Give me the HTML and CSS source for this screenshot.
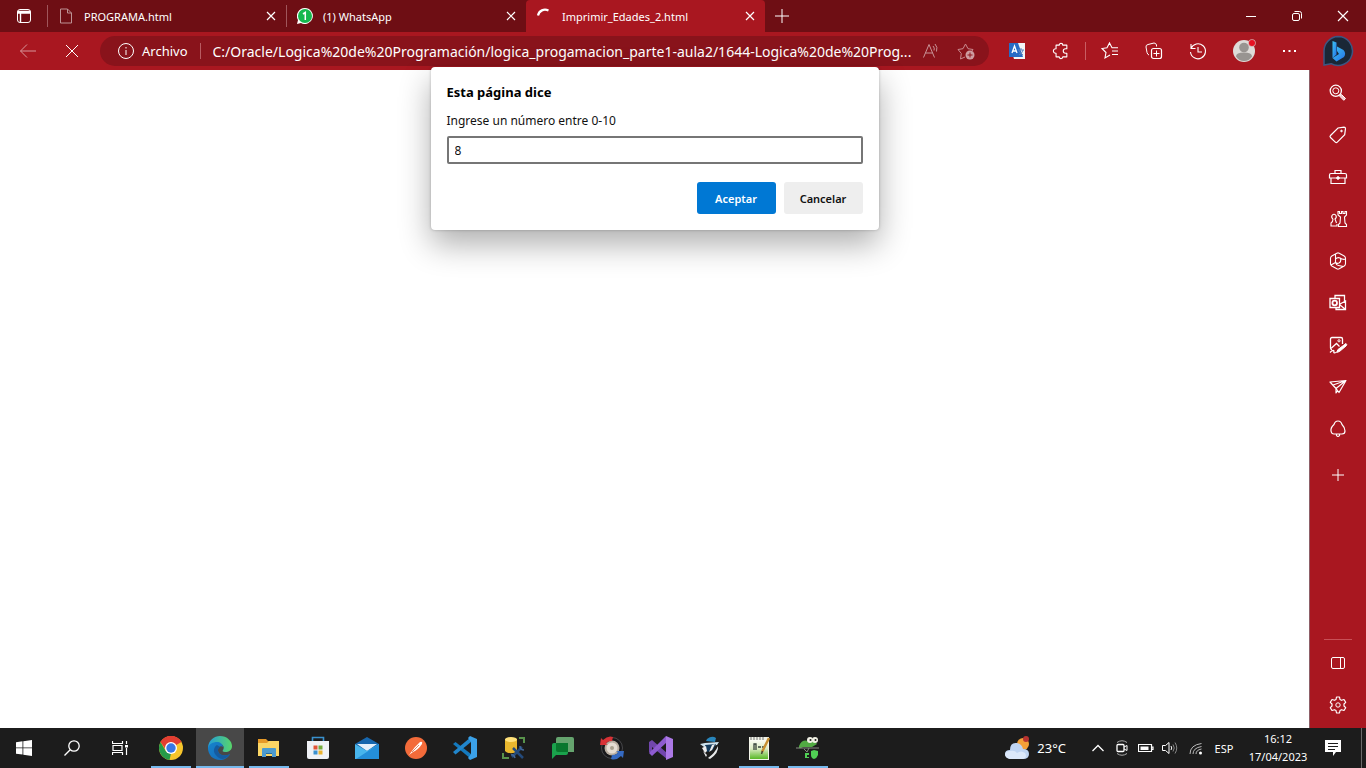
FILE: index.html
```html
<!DOCTYPE html>
<html lang="es">
<head>
<meta charset="utf-8">
<title>Imprimir_Edades_2.html</title>
<link rel="stylesheet" href="styles.css">
</head>
<body>
<div class="screen">
  <header class="tabbar">
    <button class="workspace" aria-label="Menú de pestañas"><svg class="i16" viewBox="0 0 16 16"><rect x="1.5" y="1.5" width="13" height="13" rx="2.5"/><path d="M1.5 3.5h13M1.5 5h13M4.500 5v9.500" stroke-width="1.400"/></svg></button>
    <div class="tab divided">
      <svg class="i16 faint" viewBox="0 0 16 16"><path d="M2.500 1h7l4 4v10h-11zM9.500 1v4h4"/></svg>
      <span class="tab-title">PROGRAMA.html</span>
      <button class="tab-close" aria-label="Cerrar pestaña"><svg class="i16" viewBox="0 0 16 16"><path d="M4 4l8 8M12 4l-8 8" stroke-width="1.200"/></svg></button>
    </div>
    <div class="tab divided">
      <svg class="i16 solid" viewBox="0 0 16 16"><path fill="#fff" d="M8 0a8 8 0 1 1-4 15L0 16l1-4A8 8 0 0 1 8 0z"/><circle cx="8" cy="8" r="7" fill="#16b84e"/><path d="M6 6l2.300-1.500V12" fill="none" stroke="#fff" stroke-width="1.500"/></svg>
      <span class="tab-title">(1) WhatsApp</span>
      <button class="tab-close" aria-label="Cerrar pestaña"><svg class="i16" viewBox="0 0 16 16"><path d="M4 4l8 8M12 4l-8 8" stroke-width="1.200"/></svg></button>
    </div>
    <div class="tab active">
      <svg class="i16" viewBox="0 0 16 16"><path d="M2 7.500C3 2.500 8 .5 12.500 2.500" stroke-width="2.200"/></svg>
      <span class="tab-title">Imprimir_Edades_2.html</span>
      <button class="tab-close" aria-label="Cerrar pestaña"><svg class="i16" viewBox="0 0 16 16"><path d="M4 4l8 8M12 4l-8 8" stroke-width="1.200"/></svg></button>
    </div>
    <button class="new-tab" aria-label="Nueva pestaña"><svg class="i16" viewBox="0 0 16 16"><path d="M8 1v14M1 8h14"/></svg></button>
    <div class="window-controls">
      <button class="win" aria-label="Minimizar"><svg class="i16" viewBox="0 0 16 16"><path d="M3 8.500h10"/></svg></button>
      <button class="win" aria-label="Restaurar"><svg class="i16" viewBox="0 0 16 16"><rect x="3.500" y="5.500" width="7" height="7" rx="1.500"/><path d="M5.500 3.500h5a2 2 0 0 1 2 2v5"/></svg></button>
      <button class="win" aria-label="Cerrar"><svg class="i16" viewBox="0 0 16 16"><path d="M3 3l10 10M13 3L3 13" stroke-width="1.200"/></svg></button>
    </div>
  </header>

  <div class="toolbar">
    <button class="tool" aria-label="Atrás"><svg class="i20 faint" viewBox="0 0 20 20"><path d="M18 10H2.500M9 3.500L2.500 10 9 16.500"/></svg></button>
    <button class="tool" aria-label="Detener"><svg class="i20" viewBox="0 0 20 20"><path d="M4 4l12 12M16 4L4 16"/></svg></button>
    <div class="address">
      <svg class="i18" viewBox="0 0 18 18"><circle cx="9" cy="9" r="7.500"/><path d="M9 8v5M9 5v1.500"/></svg>
      <span class="scheme">Archivo</span>
      <input class="url" aria-label="Dirección" value="C:/Oracle/Logica%20de%20Programación/logica_progamacion_parte1-aula2/1644-Logica%20de%20Prog..." readonly>
      <button class="address-icon" aria-label="Leer en voz alta"><svg class="i18 faint" viewBox="0 0 18 18"><path d="M1.500 15.500L7 2.500l5.500 13M3.500 11h7M11 4q2 2 1 4.500M13 2q3 3 1.500 7.500"/></svg></button>
      <button class="address-icon favorite" aria-label="Agregar a favoritos"><svg class="i18" viewBox="0 0 18 18"><path d="M8 15l-4.500 2 .8-5.500L1 7.500l5-.8L8.500 2 11 6.700l5 .8-1 1.500" stroke="#c98a8f"/><circle cx="13" cy="13" r="4.500" fill="#ce9da1" stroke="none"/><path d="M13 10.500v5M10.500 13h5" stroke="#8d141c"/></svg></button>
    </div>
    <button class="tool" aria-label="Traductor"><svg class="i16 solid" viewBox="0 0 16 16"><path fill="#f3f5f8" d="M0 0h16v16H5z"/><path fill="#286bc5" d="M0 0h9l5 14H0z"/><path d="M3 10L5.500 3 8 10M4 8h3" fill="none" stroke="#fff" stroke-width="1.300"/><path d="M9 7h6M12 5v2M14 7q-1 4-4 5M10 8q2 3 4 4" fill="none" stroke="#5c83bd"/></svg></button>
    <button class="tool" aria-label="Extensiones"><svg class="i18" viewBox="0 0 20 20"><path d="M8 3.500a2 2 0 0 1 4 0h4.500v4H15a2.500 2.500 0 0 0 0 5h1.500v4H12a2 2 0 0 1-4 0H4.500v-4H4a2.500 2.500 0 0 1 0-5h.5v-4z" stroke-linejoin="round" stroke-width="1.200"/></svg></button>
    <span class="tool-divider"></span>
    <button class="tool" aria-label="Favoritos"><svg class="i20" viewBox="0 0 20 20"><path d="M10 14l-5 3 1-5.500L2 7.500l5-.8L9.500 2 12 6.700h6M12 10h6M12 13.500h6" stroke-width="1.100"/></svg></button>
    <button class="tool" aria-label="Colecciones"><svg class="i20" viewBox="0 0 20 20"><rect x="7.500" y="7.500" width="10" height="10" rx="2" stroke-width="1.200"/><path d="M12.500 9.500v6M9.500 12.500h6M5 14q-1.500-.5-2-2.500L2 6q-.3-2 2-2.500L10 2q2 0 2.500 2v1.500"/></svg></button>
    <button class="tool" aria-label="Historial"><svg class="i20" viewBox="0 0 20 20"><path d="M3 3v4.500h4.500M3 7.500A7.500 7.500 0 1 1 2.500 11M10 6v5h4" stroke-width="1.100"/></svg></button>
    <button class="tool profile" aria-label="Perfil"><svg class="i24 solid" viewBox="0 0 24 24"><circle cx="12" cy="12" r="11" fill="#dedbd8"/><circle cx="12" cy="8.500" r="4.800" fill="#989491"/><path d="M4 17.500q0-4 8-4t8 4q-3 4.500-8 4.500t-8-4.500z" fill="#989491"/><circle cx="20" cy="4" r="3.800" fill="#d9a3a6"/><circle cx="20" cy="4" r="3" fill="#e81123"/></svg></button>
    <button class="tool menu" aria-label="Configuración y más"><svg class="i20 solid" viewBox="0 0 20 20"><path fill="#fff" d="M4 9h2v2H4zM9.500 9h2v2h-2zM15 9h2v2h-2z"/></svg></button>
    <button class="tool bing" aria-label="Bing"><svg class="i32" viewBox="0 0 32 32"><defs><linearGradient id="b1" x2="1" y2="1"><stop stop-color="#3cc7f1"/><stop offset="1" stop-color="#2570e8"/></linearGradient></defs><path d="M16 1.500a14.500 14.500 0 1 1-7 27.200L2 30V16A14.500 14.500 0 0 1 16 1.500z" fill="#1a2736" stroke="#3d5682" stroke-width="1.500"/><path d="M10.500 6l4 1.500v12l-4 3.500z" fill="url(#b1)" stroke="none"/><path d="M15 11.500l6.500 3.500q3 3.500.5 7l-7.500 4.500-4-3.500 6.500-4-2-3z" fill="url(#b1)" stroke="none"/></svg></button>
  </div>

  <div class="body">
    <main class="page">
      <form class="dialog" role="dialog" aria-labelledby="dialog-title">
        <h1 class="dialog-title" id="dialog-title">Esta página dice</h1>
        <label class="dialog-label" for="answer">Ingrese un número entre 0-10</label>
        <input class="dialog-input" id="answer" type="text" value="8">
        <div class="dialog-actions">
          <button class="btn primary" type="button">Aceptar</button>
          <button class="btn" type="button">Cancelar</button>
        </div>
      </form>
    </main>
    <aside class="sidebar">
      <button class="side" aria-label="Buscar"><svg class="i20" viewBox="0 0 20 20"><circle cx="7.800" cy="7.800" r="5.600" stroke-width="1.300"/><circle cx="7.800" cy="7.800" r="3"/><path d="M12 12l1.500-.5 4 4-1.700 1.800-4-4z" fill="#f3c7ca"/></svg></button>
      <button class="side" aria-label="Compras"><svg class="i20" viewBox="0 0 20 20"><path d="M2.500 10.500L10 3l6-.8q1.500 0 1.500 1.500l-.8 6-7.400 7.500q-1 1-2 0L2.500 12.500q-1-1 0-2z" stroke-width="1.200"/><circle cx="13.500" cy="6" r=".8" fill="#fff"/></svg></button>
      <button class="side" aria-label="Herramientas"><svg class="i20" viewBox="0 0 20 20"><path d="M7 6.500v-3h6v3M1.500 11V8q0-1.500 1.500-1.500h14q1.500 0 1.500 1.500v3zM3 11v5.500h14V11" stroke-width="1.200"/><circle cx="10" cy="11" r="1.300" fill="#fff"/></svg></button>
      <button class="side" aria-label="Juegos"><svg class="i20" viewBox="0 0 20 20"><path d="M5 10q-2-1.500-1-3.500 2-2.500 4 0 1 2-1 3.500l1.500 4M5 10q0 3-2 4v3h6v-2M10 2.500h1.500v2h2v-2H15v2h2v-2h1.500V6l-2 2 .5 6 1.500 1.500v2h-8v-2L12 14l.5-6L10 6z" stroke-width="1.100"/></svg></button>
      <button class="side" aria-label="Microsoft 365"><svg class="i20" viewBox="0 0 20 20"><path d="M8.800 2.200q1.200-.6 2.400 0l5 2.800q1.300.8 1.300 2.200v5.600q0 1.400-1.300 2.200l-5 2.800q-1.200.6-2.400 0l-5-2.800q-1.300-.8-1.300-2.200V7.200Q2.500 5.800 3.800 5zM7.500 3v8.500q.5 2.500 3 3l5 1M7.500 8q2-2 4.500-1 3 2 5.500 1M12.500 7.500q1 3-1.500 4.500-2 1-3.500-.5M3 14l4.500-2.500" stroke-width="1.100" stroke-linejoin="round"/></svg></button>
      <button class="side" aria-label="Outlook"><svg class="i20" viewBox="0 0 20 20"><path d="M7 5V2.500h9.500V8M12 11l5.500-3v8.500H8V15M12 12l5 4M2 5.500h9.500v9H2z" stroke-width="1.300"/><circle cx="6.700" cy="10" r="2.300" stroke-width="1.800"/></svg></button>
      <button class="side" aria-label="Editor de imágenes"><svg class="i20" viewBox="0 0 20 20"><path d="M4 14.500q-1.500 0-1.500-2V4q0-1.500 1.500-1.500h9q1.500 0 1.500 1.500v5M3.500 13l5-4.500 3 3M2 17.500q3-3 4-1.500-1 2.500 2 1.500" stroke-width="1.300"/><circle cx="11" cy="5.800" r="1.100"/><path fill="#fff" d="M18 8.500q1.500 1 0 2.500l-6.500 5.500-3 1 1.500-3z"/></svg></button>
      <button class="side" aria-label="Drop"><svg class="i20" viewBox="0 0 20 20"><path d="M2 5l16-1.500-7 12-3-4zM18 3.500L8 11.500v4.500l2-2.500M2 5l6 6.500M5 8l13-4.500" stroke-width="1.200" stroke-linejoin="round"/></svg></button>
      <button class="side" aria-label="Árbol"><svg class="i20" viewBox="0 0 20 20"><path d="M10 2q-3 0-4 3.500-3.500 3-3 6.500.5 3 3 3h8q3 0 3-3 0-3.500-3-6.500Q13 2 10 2zM8.500 15v1.500q1.500 2 3 0V15" stroke-width="1.200"/></svg></button>
      <button class="side add" aria-label="Agregar"><svg class="i20" viewBox="0 0 20 20"><path d="M10 4v12M4 10h12"/></svg></button>
      <div class="side-bottom">
        <button class="side" aria-label="Ocultar barra lateral"><svg class="i20" viewBox="0 0 20 20"><rect x="3.500" y="4.500" width="13" height="11" rx="1.500"/><path d="M12.500 4.500v11"/></svg></button>
        <button class="side" aria-label="Configuración"><svg class="i20" viewBox="0 0 20 20"><path d="M8.500 2h3l.5 2.500 1.500.8 2.500-.8 1.700 2.800L16 9v2l1.700 1.700L16 15.500l-2.500-.8-1.500.8-.5 2.500h-3L8 15.500l-1.500-.8-2.500.8-1.700-2.800L4 11V9L2.300 7.300 4 4.500l2.500.8L8 4.500z" stroke-linejoin="round" stroke-width="1.200"/><circle cx="10" cy="10" r="2.200"/></svg></button>
      </div>
    </aside>
  </div>

  <footer class="taskbar">
    <button class="task" aria-label="Inicio"><svg class="i16 solid" viewBox="0 0 16 16"><path fill="#fff" d="M0 2.300L6.500 1.300v6.200H0zM7.300 1.200L16 0v7.500H7.300zM0 8.300h6.500v6.300L0 13.700zM7.300 8.300H16V16l-8.700-1.200z"/></svg></button>
    <button class="task" aria-label="Buscar"><svg class="i16" viewBox="0 0 16 16"><circle cx="10" cy="6" r="5.200" stroke-width="1.300"/><path d="M6.200 9.800L.5 15.500" stroke-width="1.300"/></svg></button>
    <button class="task" aria-label="Vista de tareas"><svg class="i16" viewBox="0 0 16 16"><path d="M.5 1v2.500h10V1M.5 15v-2.500h10V15M1 5.500h9v5H1zM14.500 1v3M14.500 8v7" stroke-width="1.200"/><path d="M13 5h3v2.500h-3z" fill="#fff" stroke="none"/></svg></button>
    <nav class="apps" aria-label="Aplicaciones">
      <button class="task running" aria-label="Chrome"><svg class="i24 solid" viewBox="0 0 24 24"><circle cx="12" cy="12" r="12" fill="#f6c52c"/><path fill="#e33e32" d="M12 12L1.600 6A12 12 0 0 1 22.400 6z"/><path fill="#269a48" d="M1.600 6L7 15.500l5 2-1.500 6.400A12 12 0 0 1 1.600 6z"/><path fill="#e33e32" d="M12 6h10.400A12 12 0 0 0 1.600 6L7 14z"/><circle cx="12" cy="12" r="6" fill="#fff"/><circle cx="12" cy="12" r="4.700" fill="#3978e5"/></svg></button>
      <button class="task current" aria-label="Edge"><svg class="i24 solid" viewBox="0 0 24 24"><defs><linearGradient id="e1" x2="1"><stop stop-color="#249dd9"/><stop offset="1" stop-color="#58d66a"/></linearGradient><linearGradient id="e2" x2="1" y2="1"><stop stop-color="#1683cc"/><stop offset="1" stop-color="#1668b5"/></linearGradient></defs><path fill="url(#e1)" d="M0 11C1 4 6 0 12 0c7 0 12 5 12 10 0 4-3 6-7 6-2 0-3-1-2-2 2-3 0-6-4-6-5 0-9 2-11 6z"/><path fill="url(#e2)" d="M0 12c1-4 5-6 9-6 3 0 6 2 6 5-2-2-5 0-5 3 0 5 6 7 12 4-2 4-6 6-10 6C5 24 0 19 0 12z"/><path fill="#155b9f" d="M9 9c-3 2-4 6-2 9s5 5 8 5c3-.5 6-3 7-5-6 3-12 1-12-4 0-1 1-2 2-3z"/></svg></button>
      <button class="task running" aria-label="Explorador de archivos"><svg class="i24 solid" viewBox="0 0 24 24"><path fill="#e79a27" d="M1 3h8l2 2h11v14H1z"/><path fill="#fbd665" d="M1 7h9l2-2h10v15H1z"/><path fill="#4c9bce" d="M5 13q0-1 1-1h12q1 0 1 1v8h-4v-4H9v4H5z"/><path fill="#286f9c" d="M9 17h6v1H9z"/></svg></button>
      <button class="task" aria-label="Microsoft Store"><svg class="i24 solid" viewBox="0 0 24 24"><path d="M6.500 5V1.500h11V5" fill="none" stroke="#3991ce" stroke-width="1.600"/><path fill="#eff1f5" d="M1 5h22v16q0 2-2 2H3q-2 0-2-2z"/><path fill="#e25437" d="M7.500 9.500h4v4h-4z"/><path fill="#73ab3c" d="M12.500 9.500h4v4h-4z"/><path fill="#3990d0" d="M7.500 14.500h4v4h-4z"/><path fill="#eab22e" d="M12.500 14.500h4v4h-4z"/></svg></button>
      <button class="task" aria-label="Correo"><svg class="i24 solid" viewBox="0 0 24 24"><path fill="#1767ae" d="M0 8L12 1l12 7-12 8z"/><path fill="#e5f1fb" d="M2 8h20l-10 7z"/><path fill="#48b5ec" d="M0 8l12 7 12-7v15H0z"/><path fill="#248ed8" d="M24 8v15H1z"/></svg></button>
      <button class="task" aria-label="Postman"><svg class="i24 solid" viewBox="0 0 24 24"><circle cx="12" cy="12" r="11" fill="#f36b3a"/><path fill="#fff" d="M5 19l6-8 5-5q3-1 2 2-4 6-9 8z"/><path d="M8 16l7-7" stroke="#df8b6b"/></svg></button>
      <button class="task" aria-label="Visual Studio Code"><svg class="i24 solid" viewBox="0 0 24 24"><path fill="#1479bd" d="M0 8l2.500-2L18 18v5z"/><path fill="#2186cc" d="M0 16l2.500 2.500L18 6V1z"/><path fill="#3ba1e8" d="M17 0l7 3v18l-7 3-2-2 3-4V6l-3-4z"/></svg></button>
      <button class="task" aria-label="Data Modeler"><svg class="i24 solid" viewBox="0 0 24 24"><path fill="#e9b72d" d="M3 3v12c2 3 10 3 12 0V3z"/><ellipse cx="9" cy="3.500" rx="6" ry="2.500" fill="#ffe17a"/><path d="M17 2h5v5M1 17v5h6" fill="none" stroke="#58934b" stroke-width="2"/><path d="M10 21L20 11M11 12l10 10" fill="none" stroke="#244b7c" stroke-width="2.500"/><path d="M18 10q0 4 4 4M9 19q3-1 4 3" fill="none" stroke="#42689a" stroke-width="1.500"/></svg></button>
      <button class="task" aria-label="Google Chat"><svg class="i24 solid" viewBox="0 0 24 24"><path fill="#65a46e" d="M7 1h14q2 0 2 2v13H5V3q0-2 2-2z"/><path fill="#1aa24c" d="M3 7h14v10q0 2-2 2H5l-4 4V9q0-2 2-2z"/><path fill="#08772d" d="M5 7h12v9H7q-2 0-2-2z"/></svg></button>
      <button class="task" aria-label="Sincronización"><svg class="i24 solid" viewBox="0 0 24 24"><circle cx="12" cy="12" r="10.500" fill="#171719" stroke="#47474a"/><circle cx="12" cy="12" r="7.500" fill="#b9aea0"/><circle cx="12" cy="12" r="5.500" fill="#e6ddd2"/><circle cx="12" cy="12" r="2" fill="#aaa18e"/><path fill="#d83236" d="M0 9l1-7 2 2q5-5 10-3l-1 4Q7 5 6 8l2 1z"/><path fill="#356ac2" d="M24 15l-1 7-2-2q-5 5-10 3l1-4q5 0 6-3l-2-1z"/></svg></button>
      <button class="task" aria-label="Visual Studio"><svg class="i24 solid" viewBox="0 0 24 24"><path fill="#7146ad" d="M0 6l3-2 15 13v6L3 11v7l-3-2z"/><path fill="#8e5bd0" d="M0 17l17-17v7L3 20z"/><path fill="#ac79e6" d="M17 0l7 3v18l-7 3z"/></svg></button>
      <button class="task" aria-label="Editor"><svg class="i24 solid" viewBox="0 0 24 24"><path fill="#2885bb" d="M9 3q5-4 9-1l-1 4-9-1z"/><path fill="#cfe3ee" d="M2 8l5-1 14-1-2 3-6 1-7 1z"/><path fill="#143b5d" d="M7 9l11-1-3 6-6 2z"/><path fill="#eee" d="M4 12l4-2 1 5-2 2zM14 9l3-1-3 6-3 2z"/><path fill="#e9eaeb" d="M20 10q1 7-8 13l-2-1q7-5 10-12zM5 15l4 4-1 2z"/></svg></button>
      <button class="task running" aria-label="Notepad++"><svg class="i24 solid" viewBox="0 0 24 24"><defs><linearGradient id="n1" x2="0" y2="1"><stop stop-color="#fbfcf6"/><stop offset=".45" stop-color="#dcecc4"/><stop offset="1" stop-color="#58b825"/></linearGradient></defs><path fill="#f2f4e9" d="M2 1h20v23H2z"/><path fill="url(#n1)" d="M3 4h18v19H3z"/><path d="M4 1v3M7 1v3M10 1v3M13 1v3M16 1v3" stroke="#777"/><path d="M7 14V8h2v6M11 11h3M15 11h3" fill="none" stroke="#36423c" stroke-width="1.300"/><path d="M22 2l-7 14" stroke="#c89032" stroke-width="2.500"/><path d="M15.500 15l-1 3" stroke="#443" stroke-width="1.500"/></svg></button>
      <button class="task running" aria-label="Camaleón"><svg class="i24 solid" viewBox="0 0 24 24"><path fill="#51aa43" d="M3 10q3-7 9-5l5-2 4 5-5 3H7q-5 3-4-1z"/><circle cx="14" cy="4" r="3" fill="#f1f1e5"/><circle cx="19" cy="4" r="3" fill="#f1f1e5"/><circle cx="14.500" cy="4" r="1" fill="#222"/><circle cx="19.500" cy="4" r="1" fill="#222"/><path d="M0 12h23M8 13l3 3 2-4" fill="none" stroke="#878a83"/><path fill="#50d054" d="M15 15l3-1 4 1v4q-1 3-4 4-3-1-3-4zM9 17h4v2h-2v2h2v1H9z"/></svg></button>
    </nav>
    <div class="tray">
      <button class="weather"><svg class="i24 solid" viewBox="0 0 24 24"><circle cx="18" cy="8" r="6" fill="#f3a038"/><circle cx="21" cy="3" r="3" fill="#b73330"/><path fill="#bfd4f2" d="M5 14Q5 6 12 7q5 1 6 6 6 0 6 5t-6 5H5q-5-1-5-5t5-4z"/><path fill="#dce8fa" d="M5 15q5-1 7 2 4-3 8 0 3 5-3 6H5q-5-1-5-5 1-3 5-3z"/></svg><span>23°C</span></button>
      <button class="tray-icon" aria-label="Iconos ocultos"><svg class="i16" viewBox="0 0 16 16"><path d="M2.500 11L8 5.500l5.500 5.500" stroke-width="1.300"/></svg></button>
      <button class="tray-icon" aria-label="Reunirse ahora"><svg class="i16" viewBox="0 0 16 16"><path d="M3 2.500Q8-1 13 2.500M3 13.500q5 3.500 10 0" stroke="#aaa"/><rect x="3" y="4.500" width="7" height="7" rx="1" stroke-width="1.300"/><path d="M10 7l3-1.500v5L10 9"/></svg></button>
      <button class="tray-icon" aria-label="Batería"><svg class="i16" viewBox="0 0 16 16"><path d="M.5 4.500h13v7H.5zM13.500 7H15v2.500h-1.500" stroke-width="1.200"/><path d="M2.500 6.500h8v3.500h-8z" fill="#fff" stroke="none"/></svg></button>
      <button class="tray-icon" aria-label="Volumen"><svg class="i16" viewBox="0 0 16 16"><path d="M.5 5.500h3L7 2.500v11l-3.500-3h-3zM9 6q1.500 2 0 4"/><path d="M11 4.500q2.500 3.500 0 7M13 2.500q3.500 5.500 0 11" stroke="#888"/></svg></button>
      <button class="tray-icon wifi" aria-label="Wi-Fi"><svg class="i16" viewBox="0 0 16 16"><path d="M2 14Q2 5 13.500 3.500M5 14q0-6 8.500-7.500M8 14q0-4 5.500-5" stroke="#bbb"/><circle cx="12.500" cy="13" r="1.500" fill="#fff" stroke="none"/></svg></button>
      <button class="language">ESP</button>
      <button class="clock"><span>16:12</span><span>17/04/2023</span></button>
      <button class="notice" aria-label="Notificaciones"><svg class="i16 solid" viewBox="0 0 16 16"><path fill="#fff" d="M0 0h16v12h-5l-3 4v-4H0z"/><path d="M3 3.500h10M3 6.500h10M3 9.500h7" stroke="#1c1c1c"/></svg></button>
      <button class="show-desktop" aria-label="Mostrar escritorio"></button>
    </div>
  </footer>
</div>
</body>
</html>
```
FILE: styles.css
```css
* { box-sizing: border-box; }

body {
  margin: 0;
  font-family: "Noto Sans", "Open Sans", sans-serif;
  font-size: 11px;
  color: #fff;
}

button {
  display: flex;
  align-items: center;
  justify-content: center;
  padding: 0;
  border: 0;
  background: none;
  color: inherit;
  font: inherit;
}

svg {
  display: block;
  flex: none;
  fill: none;
  stroke: #fff;
}

.solid { stroke: none; }
.faint { opacity: 0.55; }
.i16 { width: 16px; height: 16px; }
.i18 { width: 18px; height: 18px; }
.i20 { width: 20px; height: 20px; }
.i24 { width: 24px; height: 24px; }
.i32 { width: 32px; height: 32px; }

.screen {
  display: flex;
  flex-direction: column;
  height: 100vh;
  overflow: hidden;
}

/* Tab strip */
.tabbar {
  display: flex;
  flex: none;
  height: 32px;
  background: #6e0e14;
}

.workspace { width: 48px; border-right: 1px solid #a0565b; }
.divided { border-right: 1px solid #a0565b; }
.divided + .divided { border-right: 0; }
.workspace, .divided { border-image: linear-gradient(transparent 6px, #a0565b 6px, #a0565b 26px, transparent 26px) 1; }

.tab {
  display: flex;
  align-items: center;
  gap: 10px;
  width: 239px;
  padding: 0 7px 0 10px;
}

.active {
  border-radius: 4px 4px 0 0;
  background: #a91720;
}

.tab-title { flex: 1; }
.new-tab { width: 34px; }
.window-controls { display: flex; margin-left: auto; }
.win { width: 46px; }

/* Toolbar */
.toolbar {
  display: flex;
  flex: none;
  align-items: center;
  height: 38px;
  padding-left: 6px;
  background: #a91720;
}

.tool { flex: none; width: 44px; height: 36px; }
.profile { width: 48px; }
.menu { width: 42px; }
.bing { width: 56px; }
.tool-divider { width: 1px; height: 18px; margin: 0 2px; background: #c85d63; }

.address {
  display: flex;
  flex: 1;
  align-items: center;
  min-width: 0;
  height: 30px;
  margin: 0 6px;
  padding: 0 14px 0 17px;
  border-radius: 15px;
  background: #89131b;
  font-size: 13px;
}

.scheme {
  margin-left: 7px;
  padding-right: 12px;
  border-right: 1px solid #b85b61;
  line-height: 16px;
}

.url {
  flex: 1;
  min-width: 0;
  margin-left: 12px;
  padding: 0;
  border: 0;
  background: none;
  color: #fff;
  font: inherit;
  font-size: 14px;
}

.address-icon { flex: none; width: 32px; height: 30px; }
.favorite { width: 28px; justify-content: flex-end; }

/* Page and sidebar */
.body {
  display: flex;
  flex: 1;
  min-height: 0;
}

.page {
  position: relative;
  flex: 1;
  background: #fff;
}

.dialog {
  position: absolute;
  top: -3px;
  left: 50%;
  width: 448px;
  padding: 16px;
  transform: translateX(-50%);
  border-radius: 4px;
  background: #fff;
  color: #111;
  font-size: 12px;
  box-shadow: 0 0 3px rgba(0, 0, 0, 0.25), 0 14px 32px rgba(0, 0, 0, 0.32);
}

.dialog-title {
  margin: 0 0 9px;
  font-size: 13px;
  font-weight: 700;
  line-height: 19px;
  color: #000;
}

.dialog-label {
  display: block;
  margin-bottom: 5px;
  line-height: 20px;
}

.dialog-input {
  display: block;
  width: 100%;
  height: 28px;
  padding: 0 6px;
  border: 2px solid #767676;
  border-radius: 2px;
  background: #fff;
  color: #111;
  font: inherit;
}

.dialog-actions {
  display: flex;
  justify-content: flex-end;
  gap: 8px;
  margin-top: 18px;
}

.btn {
  width: 79px;
  height: 32px;
  border-radius: 3px;
  background: #eee;
  font-size: 11px;
  font-weight: 600;
}

.primary { background: #0078d4; color: #fff; }

.sidebar {
  display: flex;
  flex: none;
  flex-direction: column;
  width: 57px;
  padding: 2px 0;
  border-left: 1px solid #8e6068;
  background: #a91720;
}

.side { width: 56px; height: 42px; }
.add { margin-top: 4px; }

.side-bottom {
  margin-top: auto;
  padding-top: 3px;
  background: linear-gradient(#c85057, #c85057) center top / 28px 1px no-repeat;
}

/* Taskbar */
.taskbar {
  display: flex;
  flex: none;
  height: 40px;
  background: #1c1c1c;
}

.task { width: 48px; height: 40px; }
.apps { display: flex; gap: 1px; margin-left: 3px; }
.running { background: linear-gradient(#76b9ed, #76b9ed) center bottom / 40px 2px no-repeat; }
.current { background: linear-gradient(#76b9ed, #76b9ed) center bottom / 100% 2px no-repeat #484848; }

.tray {
  display: flex;
  align-items: center;
  height: 40px;
  margin-left: auto;
}

.weather { gap: 8px; margin-right: 20px; font-size: 13px; }
.tray-icon { width: 24px; height: 40px; }
.wifi { width: 28px; }
.language { width: 28px; }

.clock {
  flex-direction: column;
  width: 80px;
  line-height: 18px;
}

.notice { width: 30px; height: 40px; }
.show-desktop { width: 5px; height: 40px; margin-left: 13px; border-left: 1px solid #6a6a6a; }
```
